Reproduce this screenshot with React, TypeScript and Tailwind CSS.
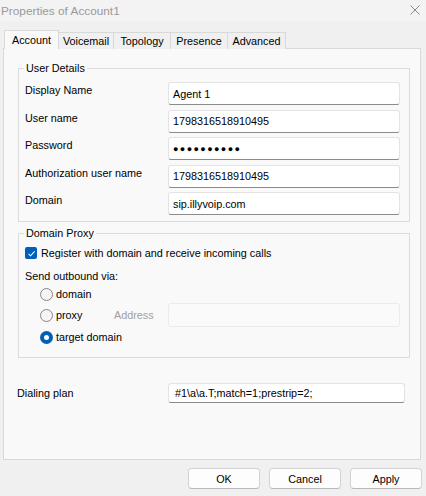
import React from "react";

const Input = ({ value, w = "w-[232px]", h = "h-[23px]", children }: { value?: string; w?: string; h?: string; children?: React.ReactNode }) => (
  <div className={`${w} ${h} flex items-center px-[4px] bg-white border border-[#e3e3e3] border-b-[#8b8b8b] rounded-[3px] leading-[14px] whitespace-nowrap overflow-hidden`}>
    {children ?? value}
  </div>
);

const Radio = ({ checked }: { checked?: boolean }) =>
  checked ? (
    <span className="w-[13px] h-[13px] rounded-full bg-[#005fb8] flex items-center justify-center shrink-0">
      <span className="w-[5px] h-[5px] rounded-full bg-white" />
    </span>
  ) : (
    <span className="w-[13px] h-[13px] rounded-full border border-[#868686] bg-[#f5f5f5] shrink-0" />
  );

const Group = ({ title, className, children }: { title: string; className: string; children: React.ReactNode }) => (
  <div className={`relative border border-[#dcdcdc] ${className}`}>
    <span className="absolute left-[5px] top-[-8px] px-[2px] bg-[#f9f9f9] leading-[14px]">{title}</span>
    {children}
  </div>
);

export default function App() {
  const rows: [string, React.ReactNode][] = [
    ["Display Name", "Agent 1"],
    ["User name", "1798316518910495"],
    ["Password", <span className="text-[9px] tracking-[1.4px] leading-[10px]">●●●●●●●●●●</span>],
    ["Authorization user name", "1798316518910495"],
    ["Domain", "sip.illyvoip.com"],
  ];
  const tabs: [string, string][] = [
    ["Voicemail", "w-[55px]"],
    ["Topology", "w-[57px]"],
    ["Presence", "w-[57px]"],
    ["Advanced", "w-[58px]"],
  ];
  return (
    <div className="w-[426px] h-[496px] bg-[#f0f0f0] text-[10.8px] text-black font-['Liberation_Sans',Arial,sans-serif] overflow-hidden">
      <div className="h-[21px] bg-[#f3f3f3] flex items-center justify-between pl-[1px] pr-[6px]">
        <span className="text-[11.8px] text-[#9a9a9a] leading-[14px]">Properties of Account1</span>
        <svg width="10" height="10" viewBox="0 0 10 10" className="mt-[-1px]">
          <path d="M0.5 0.5 L9.5 9.5 M9.5 0.5 L0.5 9.5" stroke="#8a8a8a" strokeWidth="1" fill="none" />
        </svg>
      </div>
      <div className="mt-[9px] ml-[4px] h-[19px] flex items-end">
        <div className="relative z-10 w-[55px] h-[19px] bg-[#f9f9f9] border-x border-t border-[#d9d9d9] flex items-center justify-center leading-[14px]">
          Account
        </div>
        {tabs.map(([t, w]) => (
          <div key={t} className={`${w} h-[17px] bg-[#f0f0f0] border-r border-t border-[#d9d9d9] flex items-center justify-center leading-[14px]`}>
            {t}
          </div>
        ))}
      </div>
      <div className="-mt-px mx-[3px] w-[418px] h-[412px] bg-[#f9f9f9] border border-[#d9d9d9] flex flex-col">
        <Group title="User Details" className="mt-[19px] ml-[14px] w-[392px] pt-[13px] pb-[6px] pl-[6px] flex flex-col gap-[4.5px]">
          {rows.map(([label, val]) => (
            <div key={label} className="flex h-[23px]">
              <span className="w-[143px] leading-[14px] pt-[1px]">{label}</span>
              <Input>{val}</Input>
            </div>
          ))}
        </Group>
        <Group title="Domain Proxy" className="mt-[11px] ml-[14px] w-[392px] h-[125px] pt-[12px] pl-[6px] flex flex-col">
          <div className="flex items-center h-[14px] gap-[4px]">
            <span className="w-[12px] h-[12px] rounded-[2px] bg-[#005fb8] flex items-center justify-center">
              <svg width="9" height="9" viewBox="0 0 9 9">
                <path d="M1.5 4.8 L3.6 6.8 L7.6 2.4" stroke="white" strokeWidth="1.1" fill="none" />
              </svg>
            </span>
            <span className="leading-[14px]">Register with domain and receive incoming calls</span>
          </div>
          <div className="mt-[9px] h-[14px] leading-[14px]">Send outbound via:</div>
          <div className="mt-[4px] ml-[15px] h-[14px] flex items-center gap-[3px]">
            <Radio />
            <span className="leading-[14px]">domain</span>
          </div>
          <div className="mt-[2px] ml-[15px] h-[24px] flex items-center">
            <div className="w-[74px] flex items-center gap-[3px]">
              <Radio />
              <span className="leading-[14px]">proxy</span>
            </div>
            <span className="w-[54px] text-[#a0a0a0] leading-[14px]">Address</span>
            <div className="w-[232px] h-[24px] bg-[#fafafa] border border-[#ebebeb] rounded-[3px]" />
          </div>
          <div className="mt-[3px] ml-[15px] h-[14px] flex items-center gap-[3px]">
            <Radio checked />
            <span className="leading-[14px]">target domain</span>
          </div>
        </Group>
        <div className="mt-[25px] ml-[13px] flex items-center h-[20px]">
          <span className="w-[151px] leading-[14px]">Dialing plan</span>
          <Input w="w-[237px]" h="h-[20px]">
            <span className="pl-[2px]">#1\a\a.T;match=1;prestrip=2;</span>
          </Input>
        </div>
      </div>
      <div className="mt-[8px] pr-[4px] flex justify-end gap-[9px]">
        {["OK", "Cancel", "Apply"].map((b) => (
          <div key={b} className="w-[72px] h-[21px] bg-[#fdfdfd] border border-[#d3d3d3] border-b-[#b8b8b8] rounded-[4px] flex items-center justify-center leading-[14px]">
            {b}
          </div>
        ))}
      </div>
    </div>
  );
}
